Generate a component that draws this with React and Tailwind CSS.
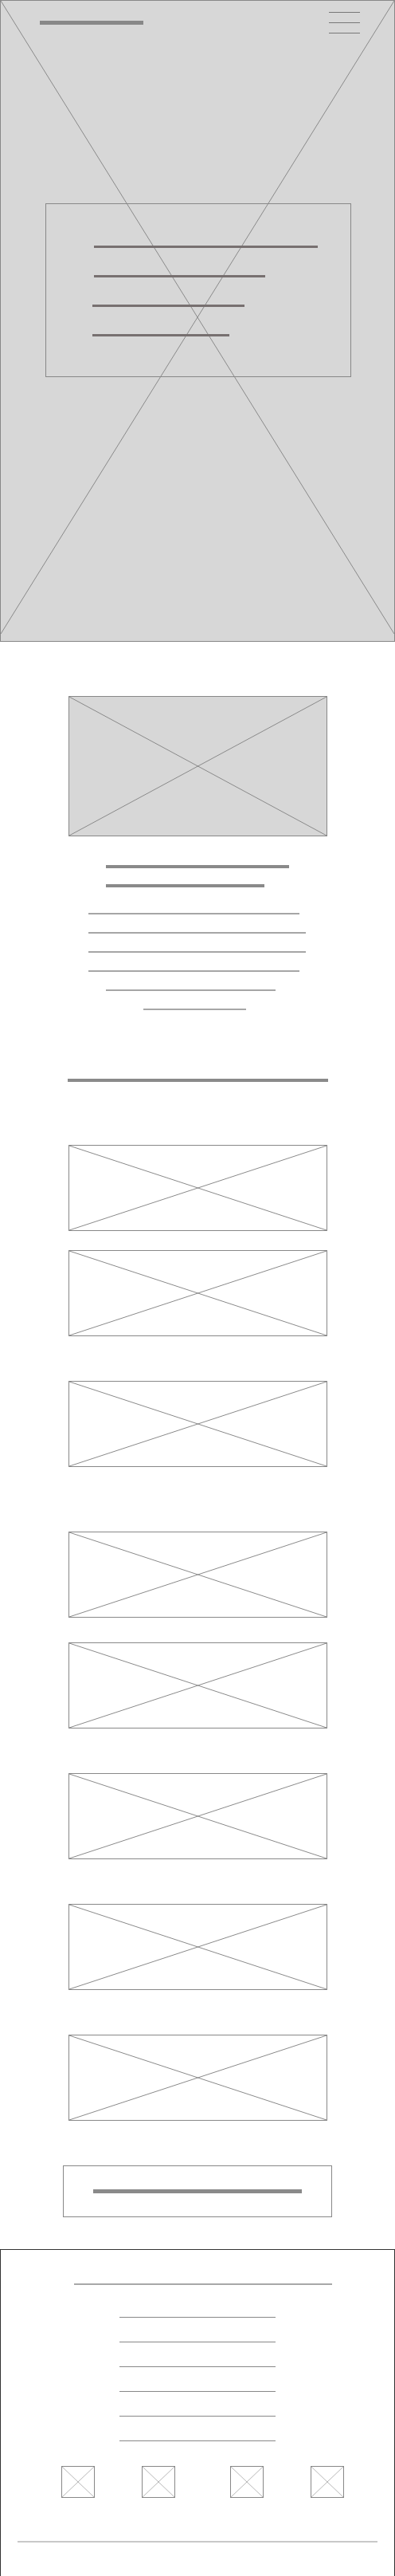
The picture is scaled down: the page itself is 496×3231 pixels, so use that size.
import React from "react";

function XLines({ w, h, color = "#8a8a8a", endY }) {
  const ey = endY ?? h;
  return (
    <svg
      className="absolute inset-0 h-full w-full"
      viewBox={`0 0 ${w} ${h}`}
      preserveAspectRatio="none"
    >
      <line x1="0" y1="0" x2={w} y2={ey} stroke={color} strokeWidth="1" />
      <line x1={w} y1="0" x2="0" y2={ey} stroke={color} strokeWidth="1" />
    </svg>
  );
}

function Card({ className }) {
  return (
    <div className={`relative ml-[86px] h-[108px] w-[325px] border border-[#888] bg-white ${className}`}>
      <XLines w={323} h={106} />
    </div>
  );
}

function Icon() {
  return (
    <div className="relative h-[40px] w-[42px] border border-[#888] bg-white">
      <XLines w={40} h={38} color="#b8b8b8" />
    </div>
  );
}

export default function App() {
  return (
    <div className="w-[496px] bg-white" style={{ fontFamily: '"Liberation Sans", Arial, sans-serif' }}>
      {/* Hero */}
      <div className="relative h-[805px] border border-[#888] bg-[#d7d7d7]">
        <XLines w={494} h={803} endY={794} />
        <div className="relative flex items-start justify-between pl-[49px] pr-[43px] pt-[14px]">
          <div className="mt-[11px] h-[5px] w-[130px] bg-[#888]" />
          <div className="flex flex-col gap-[12px]">
            <div className="h-px w-[39px] bg-[#777]" />
            <div className="h-px w-[39px] bg-[#777]" />
            <div className="h-px w-[39px] bg-[#777]" />
          </div>
        </div>
        <div className="relative ml-[56px] mt-[213px] h-[218px] w-[384px] border border-[#888] pt-[52px]">
          <div className="flex flex-col gap-[34px]">
            <div className="ml-[60px] h-[3px] w-[281px] bg-[#777070]" />
            <div className="ml-[60px] h-[3px] w-[215px] bg-[#777070]" />
            <div className="ml-[58px] h-[3px] w-[191px] bg-[#777070]" />
            <div className="ml-[58px] h-[3px] w-[172px] bg-[#777070]" />
          </div>
        </div>
      </div>

      {/* Feature */}
      <div className="relative ml-[86px] mt-[68px] h-[176px] w-[325px] border border-[#888] bg-[#d7d7d7]">
        <XLines w={323} h={174} />
      </div>
      <div className="ml-[133px] mt-[36px] h-[4px] w-[230px] bg-[#8a8a8a]" />
      <div className="ml-[133px] mt-[20px] h-[4px] w-[199px] bg-[#8a8a8a]" />

      <div className="ml-[111px] mt-[32px] h-[2px] w-[265px] bg-[#a6a6a6]" />
      <div className="ml-[111px] mt-[22px] h-[2px] w-[273px] bg-[#a6a6a6]" />
      <div className="ml-[111px] mt-[22px] h-[2px] w-[273px] bg-[#a6a6a6]" />
      <div className="ml-[111px] mt-[22px] h-[2px] w-[265px] bg-[#a6a6a6]" />
      <div className="ml-[133px] mt-[22px] h-[2px] w-[213px] bg-[#a6a6a6]" />
      <div className="ml-[180px] mt-[22px] h-[2px] w-[129px] bg-[#a6a6a6]" />

      <div className="ml-[85px] mt-[86px] h-[4px] w-[327px] bg-[#8a8a8a]" />

      {/* Cards */}
      <Card className="mt-[79px]" />
      <Card className="mt-[24px]" />
      <Card className="mt-[56px]" />
      <Card className="mt-[81px]" />
      <Card className="mt-[31px]" />
      <Card className="mt-[56px]" />
      <Card className="mt-[56px]" />
      <Card className="mt-[56px]" />

      {/* Button */}
      <div className="ml-[79px] mt-[56px] h-[65px] w-[338px] border border-[#888] pt-[29px]">
        <div className="ml-[37px] h-[5px] w-[262px] bg-[#8a8a8a]" />
      </div>

      {/* Footer */}
      <div className="mt-[40px] h-[410px] border-x border-t border-[#333] pt-[42px]">
        <div className="ml-[92px] h-[2px] w-[324px] bg-[#a8a8a8]" />
        <div className="ml-[149px] mt-[40px] flex w-[196px] flex-col gap-[30px]">
          <div className="h-px w-full bg-[#888]" />
          <div className="h-px w-full bg-[#888]" />
          <div className="h-px w-full bg-[#888]" />
          <div className="h-px w-full bg-[#888]" />
          <div className="h-px w-full bg-[#888]" />
          <div className="h-px w-full bg-[#888]" />
        </div>
        <div className="ml-[76px] mt-[31px] flex">
          <Icon />
          <div className="ml-[59px]"><Icon /></div>
          <div className="ml-[69px]"><Icon /></div>
          <div className="ml-[59px]"><Icon /></div>
        </div>
        <div className="ml-[21px] mt-[54px] h-[2px] w-[452px] bg-[#c8c8c8]" />
      </div>
    </div>
  );
}
